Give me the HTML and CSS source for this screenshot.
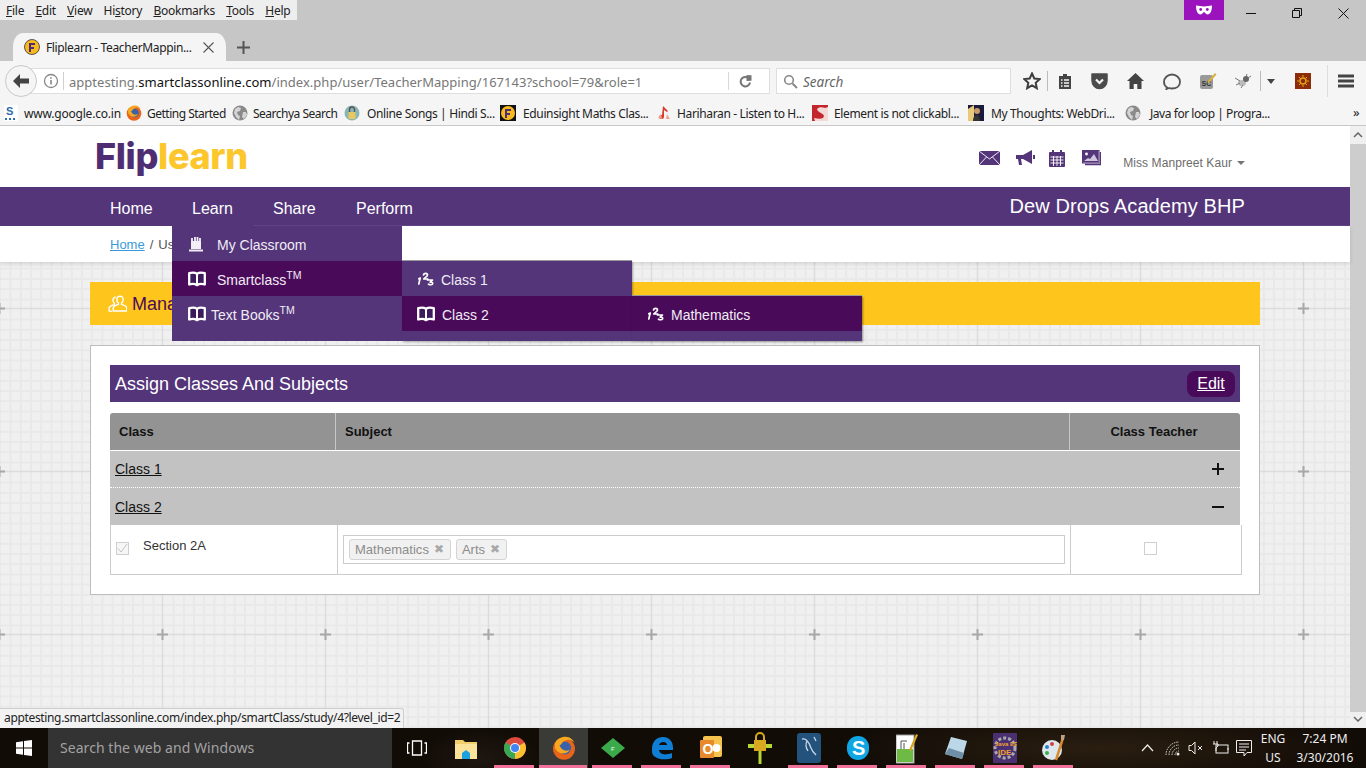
FILE: index.html
```html
<!DOCTYPE html>
<html lang="en">
<head>
<meta charset="utf-8">
<title>Fliplearn - TeacherMapping</title>
<link rel="stylesheet" href="styles.css">
</head>
<body>
<svg class="defs" width="0" height="0" aria-hidden="true">
  <defs>
    <symbol id="fav" viewBox="0 0 16 16"><circle cx="8" cy="8" r="7.5" fill="#f8b81f" stroke="#333" stroke-width=".8"/><path d="M5 4h6v2H7v2h3v2H7v3H5z" fill="#4f2d73"/></symbol>
    <symbol id="globe" viewBox="0 0 16 16"><circle cx="8" cy="8" r="7.5" fill="#8a8a8a"/><path d="M3 4l3-2 3 1-1 3-3 1 1 3 2 1-1 4-3-3-2-4zM11 7l3 0 1 3-3 4-2-2z" fill="#d4d4d4"/></symbol>
    <symbol id="ff" viewBox="0 0 16 16"><circle cx="8" cy="8.5" r="7.3" fill="#e8641b"/><circle cx="8.5" cy="8" r="4.3" fill="#3b62a8"/><path d="M2 5c1-3 4-4.500 7-4.500 3 0 5 2 6 4-2-2-4-2.500-6-1.500-3 1-2 3-4 3 1 3 4 5 7 3-2 4-8 3.500-10-1z" fill="#f7a81f"/></symbol>
    <symbol id="book" viewBox="0 0 18 16"><path d="M1.200 2.200c3-1 5.800-.8 7.800.6 2-1.400 4.800-1.600 7.800-.6v11.300c-3-.9-5.800-.7-7.800.7-2-1.400-4.800-1.600-7.800-.7z" fill="#3d1a5c" stroke="#fff" stroke-width="2.300" stroke-linejoin="round"/><path d="M9 2.800v11.400" stroke="#fff" stroke-width="2"/></symbol>
    <symbol id="nums" viewBox="0 0 16 14"><path d="M.8 12c.4-2.200.9-4 1.500-6l-1.500.8M5.500 3c.4-2.300 4-2.300 4 0 0 1.500-2.500 2.500-3.700 4h4M9.500 8h5l-2.300 2.200c1.800-.4 2.800.5 2.300 1.700-.5 1.100-2.800 1.100-4 .3" fill="none" stroke="#fff" stroke-width="1.700" stroke-linecap="round" stroke-linejoin="round"/></symbol>
  </defs>
</svg>

<header class="chrome">
  <div class="titlebar">
    <nav class="menubar">
      <span class="mi"><u>F</u>ile</span><span class="mi"><u>E</u>dit</span><span class="mi"><u>V</u>iew</span><span class="mi">Hi<u>s</u>tory</span><span class="mi"><u>B</u>ookmarks</span><span class="mi"><u>T</u>ools</span><span class="mi"><u>H</u>elp</span>
    </nav>
    <div class="persona"><svg width="16" height="10" viewBox="0 0 16 10"><path d="M0 .5c3 0 5 1 8 1s5-1 8-1c0 5-1.500 9-4.500 9-2 0-2.500-2.500-3.500-2.500S6.500 9.500 4.500 9.500C1.500 9.500 0 5.500 0 .5z" fill="#fff"/><circle cx="4.700" cy="4.500" r="1.400" fill="#9a13bd"/><circle cx="11.300" cy="4.500" r="1.400" fill="#9a13bd"/></svg></div>
    <div class="winctl">
      <svg width="10" height="10" viewBox="0 0 10 10"><path d="M0 5.500h10" stroke="#111"/></svg>
      <svg width="10" height="10" viewBox="0 0 10 10"><path d="M.5 2.500h7v7h-7zM2.500 2.500v-2h7v7h-2" fill="none" stroke="#111"/></svg>
      <svg width="11" height="11" viewBox="0 0 11 11"><path d="M.5.500l10 10M10.500.500l-10 10" stroke="#111"/></svg>
    </div>
  </div>
  <div class="tabstrip">
    <div class="tab">
      <svg class="favicon" width="16" height="16"><use href="#fav"/></svg>
      <span class="tabtitle">Fliplearn - TeacherMappin...</span>
      <svg class="tabx" width="11" height="11" viewBox="0 0 11 11"><path d="M.5.500l10 10M10.500.500l-10 10" stroke="#555" stroke-width="1.100"/></svg>
    </div>
    <svg class="newtab" width="13" height="13" viewBox="0 0 13 13"><path d="M6.500 0v13M0 6.500h13" stroke="#555" stroke-width="2"/></svg>
  </div>
  <div class="navbar">
    <div class="backbtn"><svg width="18" height="16" viewBox="0 0 18 16"><path d="M8 1L1 8l7 7v-4.500h9v-5H8z" fill="#444"/></svg></div>
    <div class="urlbar">
      <svg class="info" width="16" height="16" viewBox="0 0 16 16"><circle cx="8" cy="8" r="6.500" fill="none" stroke="#888" stroke-width="1.300"/><path d="M8 7v4.500M8 4.200v1.600" stroke="#888" stroke-width="1.600"/></svg>
      <span class="urltext">apptesting.<b>smartclassonline.com</b>/index.php/user/TeacherMapping/167143?school=79&amp;role=1</span>
      <span class="reload"><svg width="13" height="13" viewBox="0 0 13 13"><path d="M11 7.500A4.700 4.700 0 1 1 8.500 2.500" fill="none" stroke="#777" stroke-width="2"/><path d="M7.500 0v6l5-.3V.3z" fill="#777"/></svg></span>
    </div>
    <div class="searchbar">
      <svg width="15" height="15" viewBox="0 0 15 15"><circle cx="6" cy="6" r="4.300" fill="none" stroke="#888" stroke-width="1.600"/><path d="M9.500 9.500l4.500 4.500" stroke="#888" stroke-width="2"/></svg>
      <span class="searchtext">Search</span>
    </div>
    <div class="tools">
      <span class="tb tb-star"><svg width="18" height="18" viewBox="0 0 18 18"><path d="M9 1.500l2.300 5 5.400.6-4 3.700 1.100 5.400L9 13.400l-4.800 2.800 1.100-5.400-4-3.700 5.400-.6z" fill="none" stroke="#3d3d3d" stroke-width="2"/></svg></span>
      <span class="tb tb-list"><svg width="14" height="17" viewBox="0 0 14 17"><path d="M1 3h4V1h4v2h4v13H1z" fill="#444"/><path d="M3 7h1.500M6 7h5M3 10h1.500M6 10h5M3 13h1.500M6 13h5" stroke="#f5f5f5" stroke-width="1.300"/></svg></span>
      <span class="tb"><svg width="17" height="17" viewBox="0 0 17 17"><path d="M1 1h15a0 0 0 0 1 0 0v6.500a7.500 8 0 0 1-15 0z" fill="#4b4b4b" stroke="#4b4b4b" stroke-width="1.500" stroke-linejoin="round"/><path d="M5 6.500l3.500 3.500L12 6.500" fill="none" stroke="#f5f5f5" stroke-width="2.200"/></svg></span>
      <span class="tb"><svg width="17" height="16" viewBox="0 0 17 16"><path d="M8.500 0L0 8h2.500v8h4.200v-5h3.600v5h4.200V8H17z" fill="#444"/></svg></span>
      <span class="tb tb-chat"><svg width="18" height="17" viewBox="0 0 18 17"><path d="M4 14.500c-2-1.300-3-3.300-3-5.500C1 5 4.500 1.500 9 1.500S17 5 17 9s-3.500 6.500-8 6.500c-1 0-2-.2-2.800-.5L3.500 16z" fill="none" stroke="#555" stroke-width="1.800"/></svg></span>
      <span class="tb"><svg width="18" height="18" viewBox="0 0 18 18"><rect x="1" y="3" width="13" height="14" rx="2" fill="#9a9a9a"/><text x="2.500" y="14" class="sc">SC</text><path d="M9 9l7-8 1.500 1.500-7 8-2 .5z" fill="#d8b23a"/></svg></span>
      <span class="tb tb-bug"><svg width="18" height="16" viewBox="0 0 18 16"><ellipse cx="8" cy="10" rx="4" ry="3" fill="#bbb"/><circle cx="12" cy="6" r="3" fill="#666"/><path d="M1 5l5 3M2 12l4-2M7 15l2-3M13 1l-1 3M17 3l-3 2" stroke="#777"/></svg></span>
      <span class="tb-arrow"><svg width="8" height="5" viewBox="0 0 8 5"><path d="M0 0h8L4 5z" fill="#444"/></svg></span>
      <span class="tb tb-red"><svg width="16" height="16" viewBox="0 0 16 16"><rect width="16" height="16" fill="#8a2d08"/><circle cx="8" cy="8" r="3" fill="none" stroke="#e8a21a" stroke-width="1.500"/><path d="M8 2v2M8 12v2M2 8h2M12 8h2M4 4l1.500 1.500M12 4l-1.500 1.500M4 12l1.500-1.500M12 12l-1.500-1.500" stroke="#e8a21a"/></svg></span>
      <span class="tb tb-menu"><svg width="16" height="14" viewBox="0 0 16 14"><path d="M0 2h16M0 7h16M0 12h16" stroke="#444" stroke-width="3"/></svg></span>
    </div>
  </div>
  <div class="bookmarks">
    <span class="bm bm-a"><svg width="14" height="16" viewBox="0 0 14 16"><rect width="14" height="16" fill="#fff"/><text x="2" y="10" class="bm-s">S</text><path d="M1 14h2M5 14h2M9 14h2" stroke="#2b6cb0" stroke-width="2"/></svg><span class="bmt">www.google.co.in</span></span>
    <span class="bm bm-b"><svg width="16" height="16"><use href="#ff"/></svg><span class="bmt">Getting Started</span></span>
    <span class="bm bm-c"><svg width="16" height="16"><use href="#globe"/></svg><span class="bmt">Searchya Search</span></span>
    <span class="bm bm-d"><svg width="16" height="16" viewBox="0 0 16 16"><circle cx="8" cy="8" r="7.500" fill="#8ab5b5"/><rect x="4.500" y="7" width="7" height="7" fill="#e8c860"/><path d="M5.500 7V4.500a2.500 2.500 0 0 1 5 0V7" fill="none" stroke="#555" stroke-width="1.400"/></svg><span class="bmt">Online Songs | Hindi S...</span></span>
    <span class="bm bm-e"><svg width="16" height="16" viewBox="0 0 16 16"><rect width="16" height="16" fill="#111"/><circle cx="8" cy="8" r="7" fill="#f8b81f"/><path d="M5 4h6v2H7v2h3v2H7v3H5z" fill="#4f2d73"/></svg><span class="bmt">Eduinsight Maths Clas...</span></span>
    <span class="bm bm-f"><svg width="16" height="16" viewBox="0 0 16 16"><path d="M7 1l5 5-1 1-3-2v7a2.500 2 0 1 1-2-2z" fill="#d93a2a"/><path d="M2 13l3-4 1 5zM11 9l3 5-4 0z" fill="#f0a090"/></svg><span class="bmt">Hariharan - Listen to H...</span></span>
    <span class="bm bm-g"><svg width="16" height="16" viewBox="0 0 16 16"><rect width="16" height="16" fill="#c4262e"/><path d="M13 3C9 1 3 3 6 6s8 3 5 7c-2 1-5 1-9 0l1 3h13V2z" fill="#f2d9d6"/></svg><span class="bmt">Element is not clickabl...</span></span>
    <span class="bm bm-h"><svg width="16" height="16" viewBox="0 0 16 16"><rect width="16" height="16" fill="#1a1a3a"/><path d="M0 16V4l6-4v16z" fill="#e8c87a"/><circle cx="9" cy="6" r="3" fill="#c89a6a"/><path d="M5 16c0-4 2-6 4-6s3 2 3 6z" fill="#333"/></svg><span class="bmt">My Thoughts: WebDri...</span></span>
    <span class="bm bm-i"><svg width="16" height="16"><use href="#globe"/></svg><span class="bmt">Java for loop | Progra...</span></span>
    <span class="bm-more">»</span>
  </div>
</header>

<div class="viewport">
  <div class="page">
    <div class="site-top">
      <div class="logo"><span class="logo-a">Flip</span><span class="logo-b">learn</span></div>
      <div class="user-area">
        <svg class="ua-mail" width="21" height="14" viewBox="0 0 21 14"><rect width="21" height="14" fill="#54357a"/><path d="M0 0l10.500 8L21 0M0 14l7.500-8M21 14l-7.500-8" fill="none" stroke="#fff" stroke-width=".9"/></svg>
        <svg class="ua-horn" width="19" height="16" viewBox="0 0 19 16"><path d="M0 5h7l9-5v14L7 9H5l1 6H3L2 9H0z" fill="#54357a"/><path d="M17 5h2v4h-2z" fill="#54357a"/></svg>
        <svg class="ua-cal" width="16" height="17" viewBox="0 0 16 17"><rect y="2" width="16" height="15" rx="1" fill="#54357a"/><path d="M1.500 7h13M1.500 10h13M1.500 13h13M4.500 6v10M8 6v10M11.500 6v10" stroke="#fff" stroke-width=".9"/><path d="M4 0v3M12 0v3" stroke="#54357a" stroke-width="2"/></svg>
        <svg class="ua-pic" width="19" height="16" viewBox="0 0 19 16"><rect x=".5" y=".5" width="16.500" height="12.500" fill="#fff" stroke="#54357a"/><path d="M1 1h15.500v11.500H1z" fill="#54357a"/><circle cx="4.500" cy="4" r="1.400" fill="#fff"/><path d="M2 11l4-3 2 1 4-5 4 7z" fill="#cfc4de"/><path d="M18.500 2v12.500H3" fill="none" stroke="#54357a" stroke-width="1.500"/></svg>
        <span class="uname">Miss Manpreet Kaur</span><span class="caret"></span>
      </div>
    </div>
    <nav class="mainnav">
      <ul class="mainmenu">
        <li class="mm mm-home">Home</li>
        <li class="mm mm-learn">Learn
          <ul class="drop">
            <li class="dr"><svg class="ico-cake" width="16" height="16" viewBox="0 0 16 16"><path d="M3 5h10v8H3z" fill="#f2eef6"/><path d="M4 2v5M7 1v6M9.500 1v6M12 2v5" stroke="#f2eef6" stroke-width="1.800"/><path d="M1 13.500h14v2H1z" fill="#f2eef6"/></svg><span class="dr-t1">My Classroom</span></li>
            <li class="dr dr-on"><svg class="ico" width="18" height="16"><use href="#book"/></svg><span class="tmtext">Smartclass<sup>TM</sup></span>
              <ul class="drop sub">
                <li class="dr dr-s"><svg class="ico-n" width="16" height="14"><use href="#nums"/></svg><span>Class 1</span></li>
                <li class="dr dr-s dr-on"><svg class="ico-b" width="18" height="16"><use href="#book"/></svg><span>Class 2</span>
                  <ul class="drop sub2">
                    <li class="dr dr-s dr-on"><svg class="ico-n" width="16" height="14"><use href="#nums"/></svg><span>Mathematics</span></li>
                  </ul>
                </li>
              </ul>
            </li>
            <li class="dr"><svg class="ico ico-tb" width="18" height="16"><use href="#book"/></svg><span>Text Books<sup>TM</sup></span></li>
          </ul>
        </li>
        <li class="mm mm-share">Share</li>
        <li class="mm mm-perform">Perform</li>
      </ul>
      <div class="school">Dew Drops Academy BHP</div>
    </nav>
    <div class="crumbs"><a class="crumb-link" href="#">Home</a><span class="crumb-sep">/</span><span>Us</span></div>
    <main class="content">
      <div class="banner">
        <svg width="19" height="18" viewBox="0 0 19 18"><path d="M12 1.200c-2 0-3.200 1.400-3.200 3.300 0 1.500.7 2.800 1.700 3.600v1.300c-2.400.7-4.700 1.800-5.200 3-.2.800 0 2.800 0 3.600h13.400c0-.8.200-2.800 0-3.600-.5-1.200-2.800-2.300-5.200-3V8.100c1-.8 1.700-2.100 1.700-3.600 0-1.900-1.200-3.300-3.200-3.300z" fill="none" stroke="#fff" stroke-width="1.400"/><path d="M7.500 2C6 2.300 5 3.500 5 5.200c0 1.400.6 2.500 1.400 3.200v1.200C4 10.300 1.700 11.300 1.200 12.500c-.2.800 0 2.800 0 3.600h3" fill="none" stroke="#fff" stroke-width="1.400"/></svg>
        <span class="banner-t">Mana</span>
      </div>
      <section class="card">
        <div class="card-head"><h2 class="card-title">Assign Classes And Subjects</h2><a class="edit" href="#">Edit</a></div>
        <div class="thead"><div class="th th-class">Class</div><div class="th th-subject">Subject</div><div class="th th-teacher">Class Teacher</div></div>
        <div class="acc acc-1"><a href="#">Class 1</a><svg width="12" height="12" viewBox="0 0 12 12"><path d="M6 0v12M0 6h12" stroke="#111" stroke-width="2"/></svg></div>
        <div class="acc acc-2"><a href="#">Class 2</a><svg width="12" height="12" viewBox="0 0 12 12"><path d="M0 6h12" stroke="#111" stroke-width="2"/></svg></div>
        <div class="trow">
          <div class="td td-class"><span class="chk"><svg width="13" height="13" viewBox="0 0 13 13"><path d="M2 6.500l3 3.500 6-8" fill="none" stroke="#c4c4c4"/></svg></span><span class="secname">Section 2A</span></div>
          <div class="td td-subject"><div class="taginput"><span class="tag">Mathematics<i class="tagx">✖</i></span><span class="tag">Arts<i class="tagx">✖</i></span></div></div>
          <div class="td td-teacher"><span class="chk chk-plain"></span></div>
        </div>
      </section>
    </main>
  </div>
  <aside class="scrollbar">
    <svg width="10" height="6" viewBox="0 0 10 6"><path d="M1 5l4-4 4 4" fill="none" stroke="#666" stroke-width="1.500"/></svg>
    <div class="thumb"></div>
    <svg width="10" height="6" viewBox="0 0 10 6"><path d="M1 1l4 4 4-4" fill="none" stroke="#666" stroke-width="1.500"/></svg>
  </aside>
  <div class="status">apptesting.smartclassonline.com/index.php/smartClass/study/4?level_id=2</div>
</div>

<footer class="taskbar">
  <div class="start"><svg width="16" height="16" viewBox="0 0 16 16"><path d="M0 2.200l7-1v6.300H0zM8 1l8-1v7.500H8zM0 8.500h7v6.300l-7-1zM8 8.500h8V16l-8-1.100z" fill="#fff"/></svg></div>
  <div class="tsearch">Search the web and Windows</div>
  <div class="tapps">
    <span class="app"><svg width="20" height="16" viewBox="0 0 20 16"><path d="M5.500 1h9v14h-9zM2.500 3H.5v10h2M17.500 3h2v10h-2" fill="none" stroke="#fff" stroke-width="1.300"/></svg></span>
    <span class="app"><svg width="22" height="22" viewBox="0 0 22 22"><path d="M0 3h8l2 2h12v17H0z" fill="#f3cf6b"/><path d="M0 7h22v15H0z" fill="#fbe49a"/><path d="M7 22v-6l4-3 4 3v6z" fill="#1ea1e0"/></svg></span>
    <span class="app pin"><svg width="22" height="22" viewBox="0 0 22 22"><circle cx="11" cy="11" r="11" fill="#dd4b3e"/><path d="M11 11L1.500 5.500A11 11 0 0 0 11 22z" fill="#3aa757"/><path d="M11 11l9.500-5.500A11 11 0 0 1 11 22z" fill="#fbc02d"/><circle cx="11" cy="11" r="5" fill="#fff"/><circle cx="11" cy="11" r="4" fill="#4285f4"/></svg></span>
    <span class="app pin app-on"><svg width="24" height="24"><use href="#ff"/></svg></span>
    <span class="app pin"><svg width="24" height="20" viewBox="0 0 24 20"><path d="M12 0l12 10-12 10L0 10z" fill="#3aaa4a"/><text x="10" y="13" class="tk-f">F</text></svg></span>
    <span class="app pin"><svg width="22" height="24" viewBox="0 0 22 24"><path d="M1 13C1 5 6 1 12 1c6 0 10 4 10 11v2H8c.5 4 5 6 13 3v5c-3 1.500-14 3-19-3-1-1.500-1-4-1-6zM8 9h8c0-4-7-4-8 0z" fill="#0f7fd6"/></svg></span>
    <span class="app pin"><svg width="22" height="24" viewBox="0 0 22 24"><rect x="3" y="0" width="19" height="21" rx="2" fill="#f6c34e"/><rect y="4" width="14" height="18" rx="1" fill="#e8892b"/><text x="2.500" y="18" class="tk-o">O</text><circle cx="16.500" cy="12" r="4" fill="#fff"/></svg></span>
    <span class="app"><svg width="24" height="32" viewBox="0 0 24 32"><path d="M12 12v20" stroke="#b8d636" stroke-width="3"/><path d="M0 14h24" stroke="#b8d636" stroke-width="4"/><rect x="6" y="8" width="12" height="11" fill="#d8a820"/><path d="M8 8V5a4 4 0 0 1 8 0v3" fill="none" stroke="#d8a820" stroke-width="2"/></svg></span>
    <span class="app pin"><svg width="24" height="30" viewBox="0 0 24 30"><rect width="24" height="30" rx="3" fill="#23527c"/><path d="M5 6c4-1 7 3 9 9 1 3 3 5 5 7M10 8c-2 4-1 7 1 10M17 4l2 4" fill="none" stroke="#c6d8e6" stroke-width="1.300"/></svg></span>
    <span class="app pin"><svg width="24" height="30" viewBox="0 0 24 30"><rect x="1" y="3" width="22" height="24" rx="11" fill="#10a6e4"/><text x="6" y="22" class="tk-s">S</text></svg></span>
    <span class="app pin"><svg width="22" height="32" viewBox="0 0 22 32"><rect x="0" y="3" width="18" height="28" fill="#fff" stroke="#999"/><rect x="1" y="17" width="16" height="13" fill="#6dbb45"/><path d="M5 9h6M5 9v8M8 11v6" stroke="#555"/><path d="M13 18L20 2l2 1-7 16z" fill="#d9a520"/></svg></span>
    <span class="app pin"><svg width="22" height="26" viewBox="0 0 22 26"><path d="M6 2l16 4-5 18-17-5z" fill="#bcd7e8"/><path d="M0 19l17 5 2-6-15-5z" fill="#6f8fa8"/></svg></span>
    <span class="app pin"><svg width="24" height="30" viewBox="0 0 24 30"><rect width="24" height="30" rx="1" fill="#4a3070"/><circle cx="12" cy="15" r="10" fill="none" stroke="#aaa" stroke-width="3" stroke-dasharray="3 2"/><text x="2" y="13" class="tk-j">Java EE</text><text x="5" y="22" class="tk-i">IDE</text></svg></span>
    <span class="app pin"><svg width="24" height="28" viewBox="0 0 24 28"><ellipse cx="10" cy="16" rx="10" ry="10" fill="#dfe7ee"/><circle cx="5" cy="13" r="2" fill="#2f7fd1"/><circle cx="10" cy="10" r="2" fill="#d43f3f"/><circle cx="5" cy="19" r="2" fill="#3aaa4a"/><path d="M14 26L21 4" stroke="#d88a30" stroke-width="2.500"/><path d="M19 1h4l-1 5h-3z" fill="#c0a080"/></svg></span>
  </div>
  <div class="tray">
    <span class="ti ti-up"><svg width="13" height="8" viewBox="0 0 13 8"><path d="M1 7l5.500-6L12 7" fill="none" stroke="#eee" stroke-width="1.200"/></svg></span>
    <span class="ti ti-wifi"><svg width="15" height="15" viewBox="0 0 15 15"><path d="M1 14A13 13 0 0 1 14 1M4 14A10 10 0 0 1 14 4M7 14A7 7 0 0 1 14 7M10 14A4 4 0 0 1 14 10" fill="none" stroke="#ddd" stroke-dasharray="1.500 1"/><circle cx="13" cy="13" r="1.500" fill="#eee"/></svg></span>
    <span class="ti ti-vol"><svg width="16" height="14" viewBox="0 0 16 14"><path d="M1 4.500h2.500L7 1v12L3.500 9.500H1z" fill="none" stroke="#eee"/><path d="M10 5l4 4M14 5l-4 4" stroke="#eee"/></svg></span>
    <span class="ti ti-bat"><svg width="17" height="14" viewBox="0 0 17 14"><rect x="4" y="4" width="12" height="8" fill="none" stroke="#eee"/><path d="M16 7v2" stroke="#eee"/><path d="M2 0v3M5 0v3M1 3h5v2l-2 2v3" fill="none" stroke="#eee"/></svg></span>
    <span class="ti ti-note"><svg width="16" height="17" viewBox="0 0 16 17"><path d="M.5.500h15v12H11l-3 3.500v-3.500H.5z" fill="none" stroke="#eee"/><path d="M3 4h10M3 7h10M3 10h7" stroke="#eee"/></svg></span>
    <div class="lang"><span>ENG</span><span>US</span></div>
    <div class="clock"><span>7:24 PM</span><span>3/30/2016</span></div>
  </div>
</footer>
</body>
</html>
```

FILE: styles.css
```css
* { box-sizing: border-box; }
html, body { margin: 0; padding: 0; }
body {
  width: 1366px;
  height: 768px;
  overflow: hidden;
  display: flex;
  flex-direction: column;
  font-family: "Liberation Sans", Arial, sans-serif;
  background: #fff;
}
ul { list-style: none; margin: 0; padding: 0; }
.defs { position: absolute; }

/* Browser chrome */
.chrome { height: 126px; flex: none; background: #f5f5f5; border-bottom: 1px solid #c8c8c8; font-family: "Noto Sans", "Open Sans", sans-serif; color: #222; }
.titlebar { height: 33px; background: #c6c6c6; display: flex; align-items: flex-start; }
.menubar { width: 297px; height: 20px; background: #eeeeee; display: flex; align-items: center; padding-left: 6px; font-size: 12px; letter-spacing: -.25px; }
.mi { margin-right: 11.2px; }
.persona { margin-left: 887px; width: 40px; height: 20px; background: #9a13bd; display: flex; align-items: center; justify-content: center; }
.winctl { margin-left: 22px; display: flex; align-items: center; height: 20px; gap: 36px; padding-top: 6px; }
.tabstrip { height: 28px; background: #c6c6c6; display: flex; align-items: center; padding-left: 13px; }
.tab { width: 213px; height: 28px; background: #f5f5f5; border-radius: 10px 10px 0 0 / 14px 14px 0 0; display: flex; align-items: center; padding-left: 11px; }
.tabtitle { margin-left: 6px; font-size: 12px; width: 150px; white-space: nowrap; letter-spacing: -.36px; }
.tabx { margin-left: 7px; }
.newtab { margin-left: 11px; }

.navbar { height: 39px; display: flex; align-items: center; padding: 1px 0 0 5px; position: relative; }
.backbtn { width: 32px; height: 32px; border-radius: 50%; background: #f5f5f5; border: 1px solid #c9c9c9; display: flex; align-items: center; justify-content: center; margin-right: -17px; z-index: 1; position: relative; }
.urlbar { width: 750px; height: 26px; background: #fff; border: 1px solid #dedede; display: flex; align-items: center; padding-left: 22px; }
.info { flex: none; }
.urltext { margin-left: 4px; padding-left: 5px; border-left: 1px solid #d0d0d0; height: 18px; line-height: 20px; font-size: 13px; color: #777; white-space: nowrap; width: 665px; overflow: hidden; letter-spacing: .02px; }
.urltext b { font-weight: 400; color: #111; }
.reload { border-left: 1px solid #d8d8d8; height: 18px; width: 34px; display: flex; align-items: center; justify-content: center; flex: none; }
.searchbar { margin-left: 6px; width: 235px; height: 26px; background: #fff; border: 1px solid #dedede; display: flex; align-items: center; padding-left: 6px; gap: 5px; }
.searchtext { font-style: italic; font-size: 13.5px; color: #666; padding-top: 1px; }
.tools { display: flex; align-items: center; margin-left: 6px; height: 28px; }
.tb { width: 36px; display: flex; justify-content: center; align-items: center; height: 24px; flex: none; }
.tb-star { width: 31px; border-right: 1px solid #bbb; height: 20px; }
.tb-list { width: 33px; }
.tb-chat { margin-left: 1px; }
.tb-bug { border-right: 1px solid #bbb; height: 20px; width: 35px; }
.tb-arrow { width: 19px; display: flex; justify-content: center; flex: none; }
.tb-red { margin-left: 5px; }
.tb-menu { margin-left: 6px; border-left: 1px solid #ddd; height: 32px; }

.bookmarks { height: 25px; display: flex; align-items: center; padding: 1px 0 0 4px; font-size: 12px; letter-spacing: -.36px; position: relative; color: #222; }
.bm { display: flex; align-items: center; white-space: nowrap; flex: none; }
.bmt { display: block; }
.bm-a { width: 122px; gap: 6px; letter-spacing: -.2px; }
.bm-b { width: 106px; gap: 5px; letter-spacing: -.5px; }
.bm-c { width: 112px; gap: 5px; letter-spacing: -.5px; }
.bm-d { width: 156px; gap: 7px; }
.bm-e { width: 156px; gap: 7px; }
.bm-f { width: 156px; gap: 5px; }
.bm-g { width: 156px; gap: 6px; }
.bm-h { width: 157px; gap: 7px; }
.bm-i { width: 200px; gap: 9px; letter-spacing: -.45px; }
.bm-more { position: absolute; left: 1353px; top: 3px; font-size: 13px; }

/* Viewport */
.viewport { height: 602px; flex: none; display: flex; position: relative; overflow: hidden; }
.page {
  width: 1350px;
  flex: none;
  background-color: #f0f0f0;
  background-image: url("data:image/svg+xml,%3Csvg xmlns='http://www.w3.org/2000/svg' width='163' height='163'%3E%3Cg stroke='%23e9e9e9' stroke-width='2'%3E%3Cpath d='M1 0v163M11.200 0v163M21.400 0v163M31.600 0v163M41.800 0v163M52 0v163M62.200 0v163M72.400 0v163M92.600 0v163M102.800 0v163M113 0v163M123.200 0v163M133.400 0v163M143.600 0v163M153.800 0v163'/%3E%3Cpath d='M0 1h163M0 11.200h163M0 21.400h163M0 31.600h163M0 41.800h163M0 52h163M0 62.200h163M0 72.400h163M0 92.600h163M0 102.800h163M0 113h163M0 123.200h163M0 133.400h163M0 143.600h163M0 153.800h163'/%3E%3C/g%3E%3Cpath d='M81.500 0v163M0 81.500h163' stroke='%23dcdcdc' stroke-width='1.500'/%3E%3Cpath d='M81.500 76v11M76 81.500h11' stroke='%23a8a8a8' stroke-width='2'/%3E%3C/svg%3E");
  background-position: 81px 101px;
}
.site-top { height: 61px; background: #fff; display: flex; justify-content: space-between; align-items: center; padding: 0 105px 0 95px; }
.logo { font-family: Inter, sans-serif; font-weight: 800; font-size: 36px; letter-spacing: -.35px; line-height: 61px; margin-top: -1px; height: 61px; }
.logo-a { color: #4f2d73; }
.logo-b { color: #fcc62d; }
.user-area { display: flex; align-items: center; padding-top: 3px; }
.ua-mail { margin-right: 16px; }
.ua-horn { margin-right: 14px; }
.ua-cal { margin-right: 17px; }
.ua-pic { margin-right: 22px; }
.uname { font-size: 12px; color: #6b6b6b; letter-spacing: .08px; margin-top: 10px; }
.caret { margin: 10px 0 0 5px; width: 0; height: 0; border: 4px solid transparent; border-top-color: #777; border-bottom: 0; }

.mainnav { height: 39px; background: linear-gradient(#5f4385, #5f4385) no-repeat 253px 38px / 100% 1px, #54357a; display: flex; justify-content: space-between; align-items: center; padding: 0 105px 0 0; color: #fff; position: relative; z-index: 5; }
.mainmenu { display: flex; height: 39px; }
.mm { font-size: 16px; height: 39px; line-height: 43px; flex: none; }
.mm-home { width: 172px; padding-left: 110px; }
.mm-learn { width: 81px; padding-left: 20px; position: relative; }
.mm-share { width: 83px; padding-left: 20px; }
.mm-perform { padding-left: 20px; }
.school { font-size: 20px; margin-top: -1px; letter-spacing: .1px; }

.drop { position: absolute; left: 0; top: 39px; width: 230px; background: #54357a; padding-bottom: 10px; line-height: normal; font-size: 14px; color: #f0ecf5; }
.dr { height: 35px; display: flex; align-items: center; padding: 0 0 0 16px; position: relative; }
.dr > span { padding-top: 2px; }
.dr-on { background: #4a0a5a; }
.dr svg { flex: none; }
.dr > span { margin-left: 11px; white-space: nowrap; }
.dr > .dr-t1 { margin-left: 13px; }
.dr > .ico-tb + span { margin-left: 5px; }
.dr sup { font-size: 10.5px; line-height: 0; vertical-align: 6px; }
.sub { left: 230px; top: 0; box-shadow: 0 -1px 0 #9a9a9a, 1px 1px 2px rgba(0,0,0,.3); }
.sub2 { left: 230px; top: 0; box-shadow: 0 -1px 0 #9a9a9a, 1px 1px 2px rgba(0,0,0,.4); }
.dr-s { padding-left: 16px; }
.dr > .ico-n + span { margin-left: 7px; }
.dr > .ico-b + span { margin-left: 7px; }
.ico-b { margin-left: -1px; }

.crumbs { height: 36px; background: #fff; display: flex; align-items: center; padding-left: 110px; font-size: 13px; color: #555; box-shadow: 0 2px 4px rgba(0,0,0,.12); position: relative; z-index: 1; }
.crumb-link { color: #3a9ad9; text-decoration: underline; }
.crumb-sep { margin: 0 5px; }

.content { padding: 20px 90px 0; }
.banner { height: 43px; background: #fec51c; display: flex; align-items: center; padding: 1px 0 0 18px; color: #4a0a5a; font-size: 18px; }
.banner-t { margin-left: 5px; }
.card { margin-top: 20px; height: 250px; background: #fff; border: 1px solid #bdbdbd; padding: 19px 19px 0; }
.card-head { height: 37px; background: #54357a; display: flex; justify-content: space-between; align-items: center; padding: 0 5px; color: #fff; }
.card-title { margin: 2px 0 0; font-size: 18px; font-weight: 400; }
.edit { height: 26px; width: 48px; background: #4a0a5a; border-radius: 8px; color: #fff; font-size: 16px; text-align: center; line-height: 26px; }
.thead { margin-top: 11px; height: 38px; background: #939393; display: flex; border-radius: 3px 3px 0 0; border-bottom: 1px solid #fff; }
.th { font-size: 13px; font-weight: 700; color: #111; line-height: 37px; }
.th-class { width: 226px; padding-left: 9px; border-right: 1px solid #c8c8c8; }
.th-subject { width: 734px; padding-left: 9px; border-right: 1px solid #c8c8c8; }
.th-teacher { flex: 1; text-align: center; padding-right: 2px; }
.acc { height: 37px; background: #c2c2c2; display: flex; justify-content: space-between; align-items: center; padding: 0 16px 0 5px; font-size: 14px; color: #111; }
.acc a { color: #111; text-decoration: underline; }
.acc-1 { border-bottom: 1px dotted #fff; }
.trow { height: 50px; width: 1132px; display: flex; border: 1px solid #ccc; border-top: 0; }
.td { border-right: 1px solid #ccc; }
.td-class { width: 227px; display: flex; padding: 13px 0 0 5px; font-size: 13px; color: #333; }
.chk { display: inline-block; width: 13px; height: 13px; border: 1px solid #cfcfcf; background: #f6f6f6; margin-top: 4px; flex: none; }
.chk svg { display: block; margin: -1px; }
.secname { margin-left: 14px; margin-top: 0; }
.td-subject { width: 733px; padding: 10px 5px 0 5px; }
.taginput { height: 29px; border: 1px solid #ccc; display: flex; align-items: center; padding-left: 5px; gap: 5px; }
.tag { height: 21px; border: 1px solid #d4d4d4; border-radius: 3px; background: #f1f1f1; color: #8c8c8c; font-size: 13px; padding: 0 6px 0 5px; line-height: 19px; display: flex; align-items: center; letter-spacing: .02px; }
.tagx { font-style: normal; font-size: 12px; width: 10px; margin-left: 5px; color: #a8a8a8; text-align: center; }
.td-teacher { flex: 1; border-right: 0; display: flex; justify-content: center; align-items: center; padding-right: 12px; }
.chk-plain { margin: 0 0 2px; background: #fff; }

.scrollbar { flex: 1; background: #f0f0f0; display: flex; flex-direction: column; align-items: center; justify-content: space-between; padding: 6px 0; }
.thumb { width: 16px; height: 568px; background: #cdcdcd; margin-top: 1px; }
.status { position: absolute; left: 0; bottom: 0; width: 404px; height: 20px; background: #f2f2f2; border: 1px solid #cfcfcf; border-left: 0; border-bottom: 0; border-radius: 0 3px 0 0; padding-left: 4px; font-family: "Noto Sans", sans-serif; font-size: 12px; line-height: 18px; letter-spacing: -.34px; color: #222; white-space: nowrap; }

/* Taskbar */
.taskbar {
  height: 40px; flex: none; display: flex; align-items: stretch;
  background-color: #120c07;
  background-image: radial-gradient(ellipse 260px 40px at 1100px 20px, #2a1e10, transparent), radial-gradient(ellipse 60px 30px at 480px 30px, #1e1610, transparent);
  color: #eee; font-family: "Noto Sans", sans-serif;
}
.start { width: 48px; flex: none; display: flex; align-items: center; justify-content: center; }
.tsearch { width: 344px; flex: none; background: #333; color: #a2a2a2; font-size: 14px; line-height: 40px; padding-left: 12px; letter-spacing: .05px; }
.tapps { display: flex; flex: none; }
.app { width: 49px; flex: none; display: flex; align-items: center; justify-content: center; position: relative; }
.app svg { max-height: 32px; }
.pin::after { content: ""; position: absolute; left: 4px; right: 5px; bottom: 0; height: 3px; background: #f0709a; }
.app-on { background: #3a3a36; }
.app-on::after { left: 0; right: 1px; }
.tray { display: flex; align-items: center; margin-left: 63px; flex: none; }
.ti { display: flex; justify-content: center; flex: none; }
.ti-up { width: 13px; }
.ti-wifi { width: 15px; margin-left: 11px; }
.ti-vol { width: 16px; margin-left: 7.5px; }
.ti-bat { width: 17px; margin-left: 8px; }
.ti-note { width: 16px; margin-left: 7.5px; }
.lang { margin-left: 4px; width: 34px; flex: none; display: flex; flex-direction: column; align-items: center; font-size: 12px; line-height: 19px; }
.clock { display: flex; flex: none; flex-direction: column; align-items: center; font-size: 12px; line-height: 19px; width: 70px; }

.sc { font: 700 7px "Liberation Sans", sans-serif; fill: #333; }
.bm-s { font: 700 11px "Liberation Sans", sans-serif; fill: #2b6cb0; }
.tk-f { font: 700 6px "Liberation Sans", sans-serif; fill: #cdebcf; }
.tk-o { font: 700 14px "Liberation Sans", sans-serif; fill: #fff; }
.tk-s { font: 700 20px "Liberation Sans", sans-serif; fill: #fff; }
.tk-j { font: 700 6px "Liberation Sans", sans-serif; fill: #f0a030; }
.tk-i { font: 700 8px "Liberation Sans", sans-serif; fill: #f0a030; }
```
